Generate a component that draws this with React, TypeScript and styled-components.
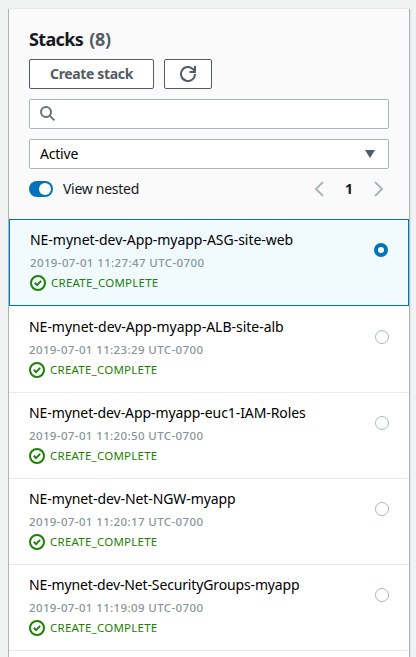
import React from 'react';
import styled, { createGlobalStyle } from 'styled-components';

const Global = createGlobalStyle`
  * { box-sizing: border-box; }
  body {
    margin: 0;
    background: #f1f3f3;
    color: #16191f;
    font: 14px/20px 'Noto Sans', 'Open Sans', sans-serif;
    overflow: hidden;
  }
`;

const Page = styled.main`
  height: 657px;
  padding: 9px 6px 0 8px;
  overflow: hidden;
`;

const Panel = styled.section`
  height: 700px;
  border: solid #aab7b8;
  border-width: 0 1px;
  background: #fff;
  box-shadow: 0 -1px 0 #e4e8e8, 1px 0 0 #dfe5e5;
`;

const Header = styled.header`
  height: 210px;
  padding: 18px 20px 0;
  background: #fafafa;
`;

const Title = styled.h2`
  margin: 0 0 8px;
  font-size: 18px;
  line-height: 24px;
  font-weight: 700;
  letter-spacing: -0.64px;
`;

const Count = styled.span`
  margin-left: 2px;
  color: #545b64;
  letter-spacing: -0.3px;
`;

const Buttons = styled.div`
  display: flex;
  gap: 10px;
  margin-bottom: 10px;
`;

const Button = styled.button<{ $width: number }>`
  display: flex;
  align-items: center;
  justify-content: center;
  width: ${p => p.$width}px;
  height: 30px;
  padding: 0;
  border: 1px solid #545b64;
  border-radius: 2px;
  background: #fff;
  color: #545b64;
  font: 700 14px/20px 'Noto Sans', sans-serif;
  letter-spacing: -0.35px;
`;

const Field = styled.div`
  display: flex;
  align-items: center;
  height: 30px;
  margin-bottom: 10px;
  padding: 0 12px 0 10px;
  border: 1px solid #aab7b8;
  border-radius: 2px;
  background: #fff;
`;

const Select = styled(Field)`
  justify-content: space-between;
  color: #000;
  letter-spacing: -0.2px;
`;

const Controls = styled.div`
  display: flex;
  align-items: center;
  height: 20px;
  padding-right: 5px;
`;

const Toggle = styled.span`
  display: flex;
  justify-content: flex-end;
  width: 24px;
  height: 16px;
  padding: 2px;
  border-radius: 8px;
  background: #0073bb;
`;

const Knob = styled.span`
  width: 12px;
  height: 12px;
  border-radius: 50%;
  background: #fff;
`;

const ToggleLabel = styled.span`
  flex: 1;
  margin-left: 10px;
  letter-spacing: -0.28px;
`;

const Pager = styled.nav`
  display: flex;
  align-items: center;
`;

const PageNumber = styled.b`
  width: 50px;
  text-align: center;
`;

const List = styled.ul`
  margin: 0;
  padding: 0;
  list-style: none;
`;

const Item = styled.li<{ $selected?: boolean }>`
  display: flex;
  justify-content: space-between;
  height: ${p => (p.$selected ? 87 : 86)}px;
  padding: 10px 20px 0;
  border: 0 solid #e6eaea;
  border-bottom-width: 1px;
  background: #fff;
  color: #000;
  ${p => p.$selected && `
    border: 1px solid #0073bb;
    background: #f1faff;
  `}
`;

const FollowingItem = styled(Item)`
  height: 87px;
  padding-top: 11px;
`;

const Name = styled.div<{ $tracking: number }>`
  line-height: 20px;
  white-space: nowrap;
  letter-spacing: ${p => p.$tracking}px;
`;

const Time = styled.div`
  margin-top: 4px;
  color: #879596;
  font-size: 11.5px;
  font-weight: 500;
  line-height: 18px;
  letter-spacing: 0.38px;
`;

const Status = styled.div`
  display: flex;
  align-items: center;
  gap: 5px;
  height: 20px;
  margin-top: 1px;
  color: #1d8102;
  font-size: 11.5px;
  letter-spacing: 0.24px;
`;

const Radio = styled.span<{ $selected?: boolean }>`
  width: 14px;
  height: 14px;
  margin-top: 13px;
  border: ${p => (p.$selected ? '4px solid #0073bb' : '1px solid #aab7b8')};
  border-radius: 50%;
  background: #fff;
`;

const RefreshIcon = () => (
  <svg width="16" height="16" viewBox="0 0 16 16" fill="none" stroke="#545b64" strokeWidth="2">
    <path d="M9.5 6H15V0" />
    <path d="M15 8a7 7 0 1 1-2.2-5.1L15 5.5" />
  </svg>
);

const SearchIcon = () => (
  <svg width="16" height="16" viewBox="0 0 16 16" fill="none" stroke="#687078" strokeWidth="2">
    <circle cx="6" cy="6" r="5" />
    <path d="M9.6 9.6l4.8 4.8" />
  </svg>
);

const CaretIcon = () => (
  <svg width="12" height="10" viewBox="0 0 12 10">
    <path d="M1 1h10L6 9z" fill="#545b64" />
  </svg>
);

const Chevron = ({ next }: { next?: boolean }) => (
  <svg width="10" height="16" viewBox="0 0 10 16" fill="none" stroke="#aab7b8" strokeWidth="2">
    <path d={next ? 'M1 1l7 7-7 7' : 'M9 1L2 8l7 7'} />
  </svg>
);

const CheckIcon = () => (
  <svg width="16" height="16" viewBox="0 0 16 16" fill="none" stroke="#1d8102" strokeWidth="2">
    <circle cx="8" cy="8" r="7" />
    <path d="M4.8 7.8l2.3 2.3 4-4.2" />
  </svg>
);

const stacks = [
  { name: 'NE-mynet-dev-App-myapp-ASG-site-web', time: '11:27:47', tracking: -0.03 },
  { name: 'NE-mynet-dev-App-myapp-ALB-site-alb', time: '11:23:29', tracking: -0.02 },
  { name: 'NE-mynet-dev-App-myapp-euc1-IAM-Roles', time: '11:20:50', tracking: -0.08 },
  { name: 'NE-mynet-dev-Net-NGW-myapp', time: '11:20:17', tracking: -0.09 },
  { name: 'NE-mynet-dev-Net-SecurityGroups-myapp', time: '11:19:09', tracking: -0.14 },
];

export default function App() {
  return (
    <Page>
      <Global />
      <Panel>
        <Header>
          <Title>Stacks <Count>(8)</Count></Title>
          <Buttons>
            <Button $width={125}>Create stack</Button>
            <Button $width={48} aria-label="Refresh"><RefreshIcon /></Button>
          </Buttons>
          <Field><SearchIcon /></Field>
          <Select>Active<CaretIcon /></Select>
          <Controls>
            <Toggle><Knob /></Toggle>
            <ToggleLabel>View nested</ToggleLabel>
            <Pager>
              <Chevron />
              <PageNumber>1</PageNumber>
              <Chevron next />
            </Pager>
          </Controls>
        </Header>
        <List>
          {stacks.map((stack, i) => {
            const Row = i === 1 ? FollowingItem : Item;
            return (
              <Row key={stack.name} $selected={i === 0}>
                <div>
                  <Name $tracking={stack.tracking}>{stack.name}</Name>
                  <Time>2019-07-01 {stack.time} UTC-0700</Time>
                  <Status><CheckIcon />CREATE_COMPLETE</Status>
                </div>
                <Radio $selected={i === 0} />
              </Row>
            );
          })}
        </List>
      </Panel>
    </Page>
  );
}
